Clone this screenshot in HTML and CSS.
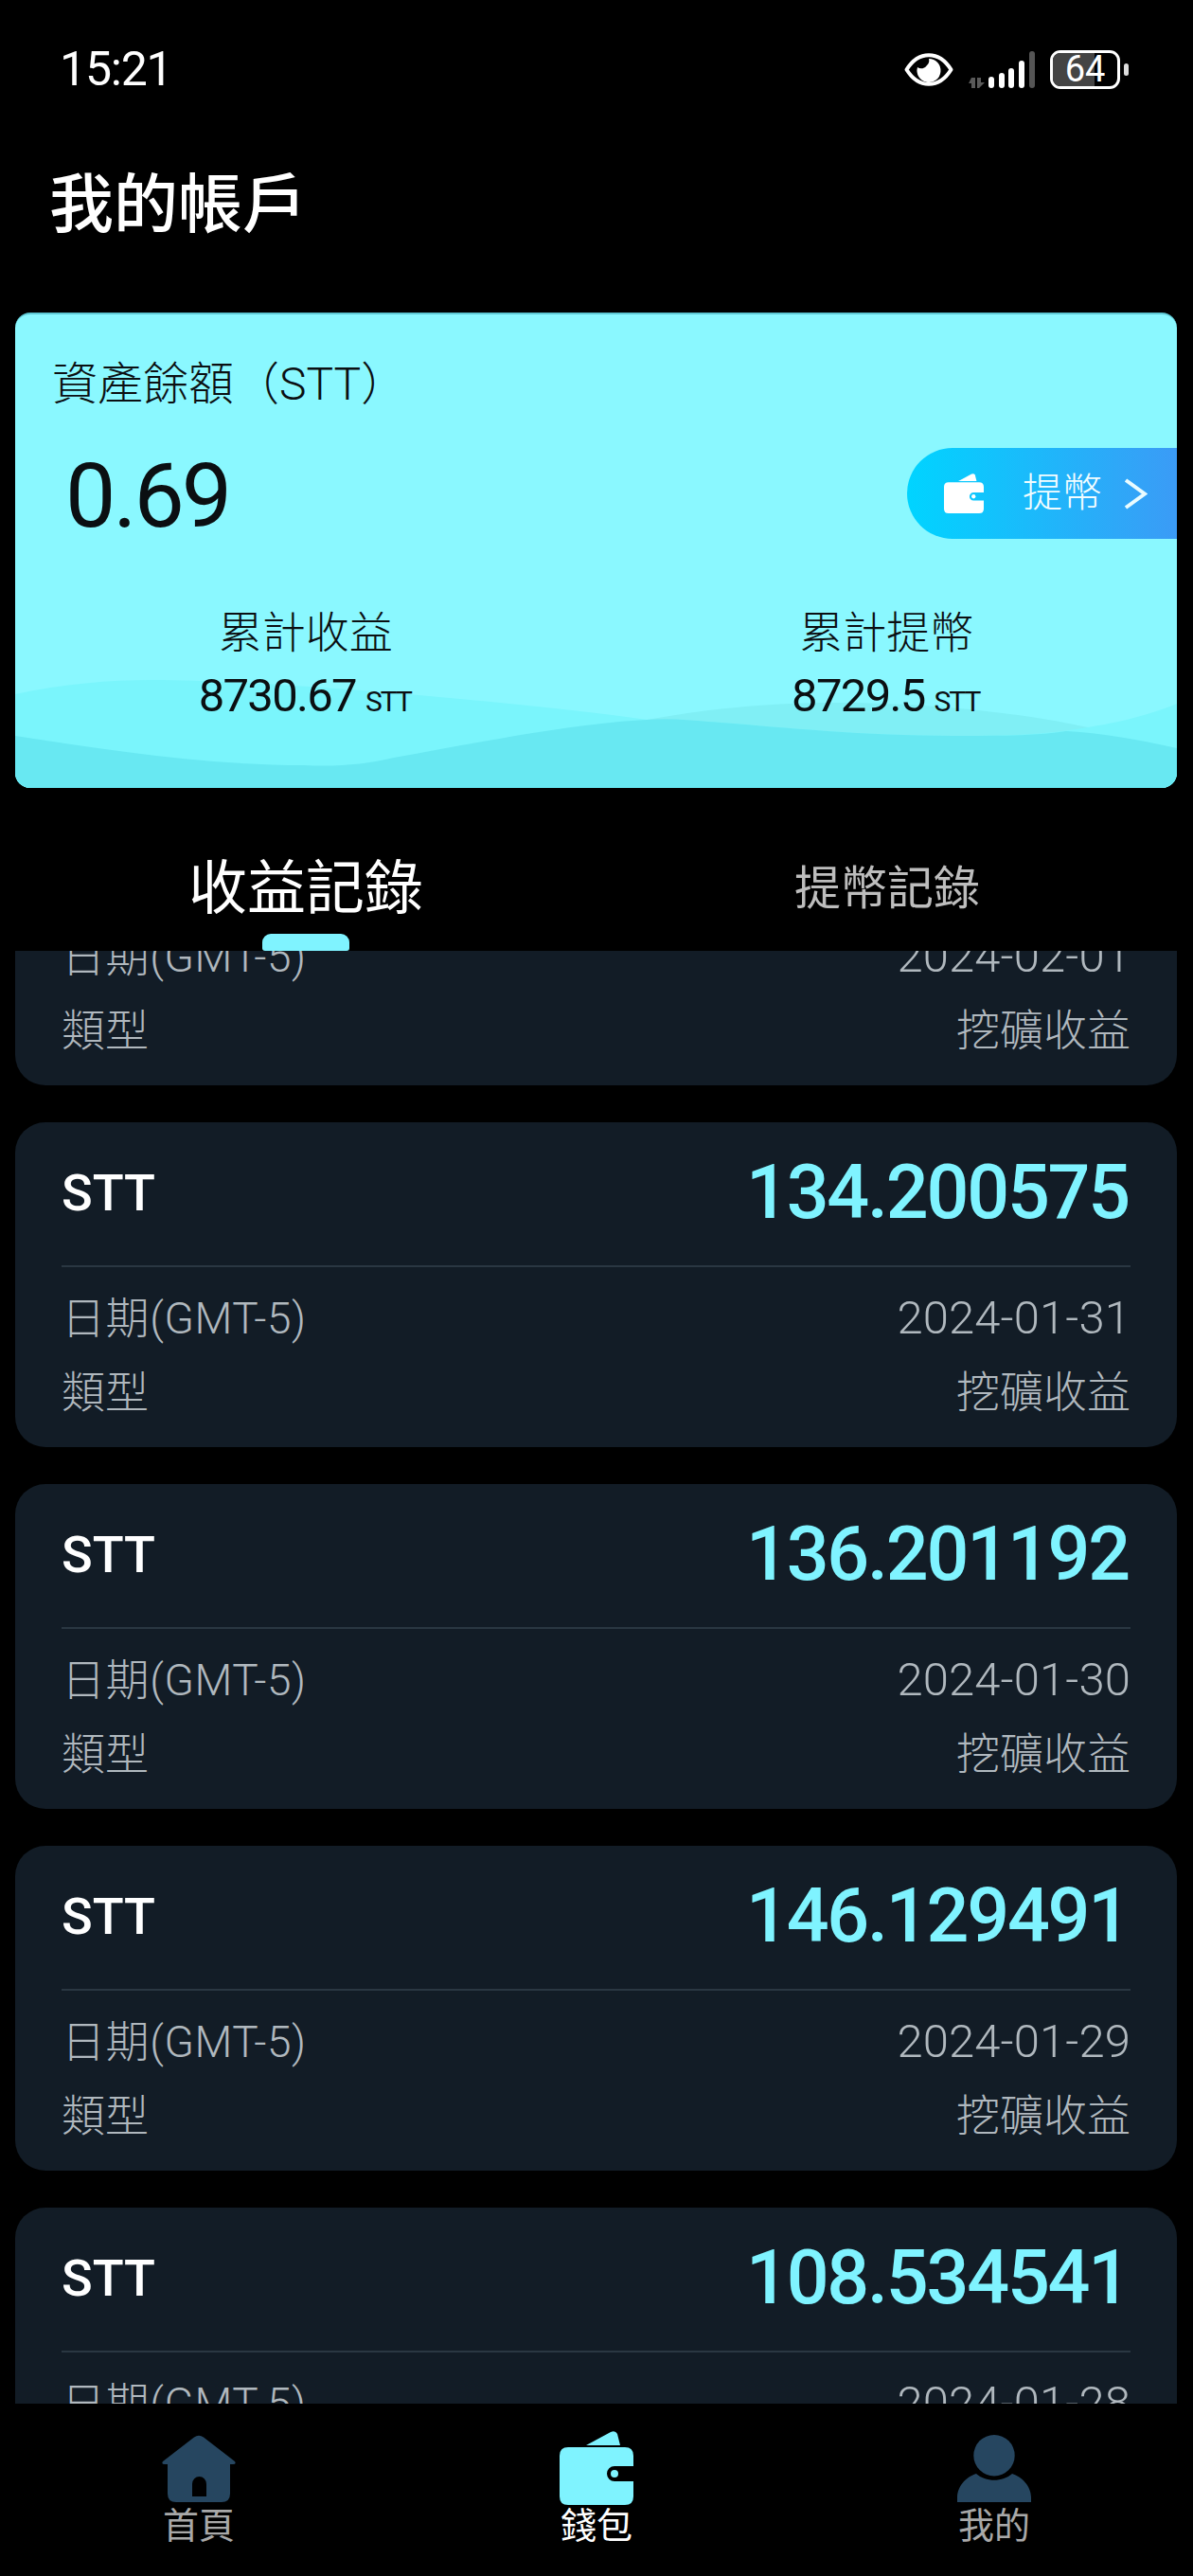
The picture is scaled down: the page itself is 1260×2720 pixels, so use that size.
FILE: index.html
```html
<!DOCTYPE html>
<html lang="zh-Hant">
<head>
<meta charset="utf-8">
<title>我的帳戶</title>
<link rel="stylesheet" href="styles.css">
</head>
<body>
<svg class="defs" width="0" height="0" aria-hidden="true">
  <symbol id="wallet" viewBox="0 0 78 78">
    <path d="M28 15 L54 1 Q59 -1 61 3 L64 15 Z"/>
    <path fill-rule="evenodd" d="M9 17 H69 Q78 17 78 26 V37 H58 A8 8 0 0 0 58 53 H78 V69 Q78 78 69 78 H9 Q0 78 0 69 V26 Q0 17 9 17 Z"/>
    <circle cx="58" cy="45" r="4"/>
  </symbol>
</svg>
<div class="page">
  <header class="status">
    <span class="time">15:21</span>
    <div class="status-icons">
      <svg class="eye" viewBox="0 0 52 35">
        <path fill="none" stroke="#fff" stroke-width="4" stroke-linejoin="round" d="M2.5 17.5 C9 7 17 2.2 26 2.2 C35 2.2 43 7 49.5 17.5 C43 28 35 32.8 26 32.8 C17 32.8 9 28 2.5 17.5 Z"/>
        <path fill="#fff" fill-rule="evenodd" d="M26 6 A12.5 12.5 0 1 1 14 15 A7 7 0 0 0 24 13 A7 7 0 0 0 26 6 Z"/>
      </svg>
      <svg class="signal" viewBox="0 0 70 40">
        <path fill="#5a5a5a" d="M3 28 H7 V39 H3 V34 L0 34 Z M9 28 H13 V33 H17 L11 39 H9 Z"/>
        <rect x="21" y="27" width="6" height="12" rx="3" fill="#fff"/>
        <rect x="32" y="23" width="6" height="16" rx="3" fill="#fff"/>
        <rect x="42" y="18" width="6" height="21" rx="3" fill="#fff"/>
        <rect x="53" y="10" width="6" height="29" rx="3" fill="#fff"/>
        <rect x="64" y="0" width="6" height="39" rx="3" fill="#555"/>
      </svg>
      <div class="battery">
        <div class="battery-box">
          <div class="battery-fill"></div>
          <span class="battery-text">64</span>
        </div>
        <i class="battery-nub"></i>
      </div>
    </div>
  </header>

  <h1 class="title">我的帳戶</h1>

  <section class="hero">
    <svg class="waves" viewBox="0 0 1227 120" preserveAspectRatio="none">
      <path fill="#7af5fc" d="M0 21 C50 10 100 6 145 6 C270 6 540 30 667 48 L1133 56 C1170 50 1200 42 1227 31 V120 H0 Z"/>
      <path fill="#80eff5" d="M667 48 C740 35 800 30 871 30 C960 30 1060 40 1133 56 C1080 65 1040 65 989 65 C890 65 800 55 732 50 Z"/>
      <path fill="#68e8f2" d="M0 65 C100 80 200 96 305 96 C340 98 370 95 400 88 C500 70 590 52 667 48 C690 46 710 48 732 50 C800 55 890 65 989 65 C1040 65 1080 65 1110 60 C1150 62 1190 70 1227 78 V120 H0 Z"/>
    </svg>
    <div class="hero-label">資產餘額（STT）</div>
    <div class="hero-amount-row">
      <span class="hero-amount">0.69</span>
      <a class="withdraw">
        <svg class="withdraw-icon"><use href="#wallet"/></svg>
        <span class="withdraw-text">提幣</span>
        <svg class="withdraw-chev" viewBox="0 0 25 33"><path d="M2 2 L22 16.5 L2 31" fill="none" stroke="#eafcff" stroke-width="4"/></svg>
      </a>
    </div>
    <div class="stats">
      <div class="stat">
        <div class="stat-label">累計收益</div>
        <div class="stat-value">8730.67<small>STT</small></div>
      </div>
      <div class="stat">
        <div class="stat-label">累計提幣</div>
        <div class="stat-value">8729.5<small>STT</small></div>
      </div>
    </div>
  </section>

  <nav class="tabs">
    <div class="tab tab-active">收益記錄</div>
    <div class="tab">提幣記錄</div>
  </nav>

  <main class="list">
    <article class="card card-scrolled">
      <div class="card-head"></div>
      <div class="card-rows">
        <div class="row"><span class="mixed">日期(GMT-5)</span><span class="date">2024-02-01</span></div>
        <div class="row"><span>類型</span><span>挖礦收益</span></div>
      </div>
    </article>
    <article class="card">
      <div class="card-head"><span class="coin">STT</span><span class="amount">134.200575</span></div>
      <div class="card-rows">
        <div class="row"><span class="mixed">日期(GMT-5)</span><span class="date">2024-01-31</span></div>
        <div class="row"><span>類型</span><span>挖礦收益</span></div>
      </div>
    </article>
    <article class="card">
      <div class="card-head"><span class="coin">STT</span><span class="amount">136.201192</span></div>
      <div class="card-rows">
        <div class="row"><span class="mixed">日期(GMT-5)</span><span class="date">2024-01-30</span></div>
        <div class="row"><span>類型</span><span>挖礦收益</span></div>
      </div>
    </article>
    <article class="card">
      <div class="card-head"><span class="coin">STT</span><span class="amount">146.129491</span></div>
      <div class="card-rows">
        <div class="row"><span class="mixed">日期(GMT-5)</span><span class="date">2024-01-29</span></div>
        <div class="row"><span>類型</span><span>挖礦收益</span></div>
      </div>
    </article>
    <article class="card">
      <div class="card-head"><span class="coin">STT</span><span class="amount">108.534541</span></div>
      <div class="card-rows">
        <div class="row"><span class="mixed">日期(GMT-5)</span><span class="date">2024-01-28</span></div>
      </div>
    </article>
  </main>

  <footer class="bottom-nav">
    <div class="nav-item">
      <svg class="nav-icon" viewBox="0 0 78 78">
        <path fill="#264660" fill-rule="evenodd" d="M34 2.5 Q39 -1 44 2.5 L77 28 Q79 31 75 31 H72 V62 Q72 71 63 71 H15 Q6 71 6 62 V31 H3 Q-1 31 1 28 Z M32 65 H47 V52 A7.5 8 0 0 0 32 52 Z"/>
      </svg>
      <span class="nav-label">首頁</span>
    </div>
    <div class="nav-item nav-item-active">
      <svg class="nav-icon nav-icon-wallet"><use href="#wallet"/></svg>
      <span class="nav-label">錢包</span>
    </div>
    <div class="nav-item">
      <svg class="nav-icon" viewBox="0 0 78 78">
        <circle cx="39" cy="21.7" r="21.7" fill="#264660"/>
        <path fill="#264660" d="M0 71 V66 C0 54 10 44 20 41 C30 50 48 50 58 41 C68 44 78 54 78 66 V71 Z"/>
      </svg>
      <span class="nav-label">我的</span>
    </div>
  </footer>
</div>
</body>
</html>
```

FILE: styles.css
```css
* { box-sizing: border-box; }
html, body { margin: 0; padding: 0; background: #000; }
body {
  font-family: Roboto, "Noto Sans CJK TC", sans-serif;
  color: #fff;
}
.defs { display: block; height: 0; }
.page {
  width: 1260px;
  height: 2720px;
  display: flex;
  flex-direction: column;
  overflow: hidden;
  background: #000;
}

/* status bar */
.status {
  height: 146px;
  flex: none;
  display: flex;
  align-items: center;
  justify-content: space-between;
  padding: 0 68px 0 63px;
}
.time { font-size: 50px; line-height: 1; letter-spacing: -1.2px; }
.status-icons { display: flex; align-items: center; }
.eye { width: 52px; height: 35px; margin-right: 16px; }
.signal { width: 70px; height: 40px; margin-right: 16px; margin-top: 1px; }
.battery { display: flex; align-items: center; gap: 4px; }
.battery-box {
  position: relative;
  width: 74px;
  height: 41px;
  border: 3px solid #fff;
  border-radius: 11px;
  overflow: hidden;
  display: flex;
  align-items: center;
  justify-content: center;
}
.battery-fill {
  position: absolute;
  left: 0; top: 0; bottom: 0;
  width: 64%;
  background: #444;
}
.battery-text { position: relative; font-size: 38px; font-weight: 400; line-height: 1; }
.battery-nub { display: block; width: 5px; height: 13px; border-radius: 3px; background: #ddd; }

/* title */
.title {
  flex: none;
  height: 138px;
  margin: 0 0 46px;
  padding: 4px 0 0 52px;
  font-size: 68px;
  font-weight: 500;
  line-height: 134px;
}

/* hero */
.hero {
  position: relative;
  flex: none;
  height: 502px;
  margin: 0 17px 0 16px;
  border-radius: 16px;
  overflow: hidden;
  background: #8af8ff;
  border-top: 2px solid #5ec8d4;
  color: #0b0f12;
}
.waves {
  position: absolute;
  left: 0; right: 0; bottom: 0;
  width: 100%;
  height: 120px;
}
.hero-label {
  position: relative;
  padding: 42px 0 0 39px;
  font-size: 48px;
  line-height: 64px;
  font-weight: 300;
}
.hero-amount-row {
  position: relative;
  display: flex;
  align-items: center;
  justify-content: space-between;
  margin-top: 35px;
  padding-left: 53px;
  height: 96px;
}
.hero-amount { font-size: 95px; line-height: 96px; font-weight: 400; margin-top: 6px; letter-spacing: -3px; }
.withdraw {
  width: 285px;
  height: 96px;
  display: flex;
  align-items: center;
  padding-left: 39px;
  border-radius: 48px 0 0 48px;
  background: linear-gradient(90deg, #00d4ff, #3b9bf6);
  color: #f2fdff;
}
.withdraw-icon { width: 42px; height: 44px; fill: #fff; margin-right: 41px; }
.withdraw-text { font-size: 42px; line-height: 1; font-weight: 300; }
.withdraw-chev { width: 25px; height: 33px; margin-left: 23px; }
.stats {
  position: relative;
  display: grid;
  grid-template-columns: 1fr 1fr;
  margin-top: 68px;
}
.stat { text-align: center; }
.stat-label { font-size: 46px; line-height: 62px; font-weight: 300; }
.stat-value { font-size: 49px; line-height: 64px; margin-top: 4px; letter-spacing: -1.7px; margin-left: -2px; }
.stat-value small { font-size: 30px; margin-left: 10px; letter-spacing: -2px; }

/* tabs */
.tabs {
  flex: none;
  height: 172px;
  display: grid;
  grid-template-columns: 1fr 1fr;
  margin: 0 16px;
}
.tab {
  position: relative;
  text-align: center;
  font-size: 49px;
  line-height: 80px;
  padding-top: 67px;
  height: 172px;
  color: #bdbdbd;
}
.tab-active { font-size: 62px; color: #fff; font-weight: 400; }
.tab-active::after {
  content: "";
  position: absolute;
  left: 50%;
  bottom: 0;
  width: 92px;
  height: 18px;
  margin-left: -46px;
  border-radius: 9px 9px 3px 3px;
  background: #7ff3ff;
}

/* list */
.list {
  flex: 1;
  min-height: 0;
  overflow: hidden;
  padding: 0 17px 0 16px;
}
.card {
  height: 343px;
  margin-bottom: 39px;
  border-radius: 32px;
  background: #121c26;
}
.card-scrolled { margin-top: -201px; }
.card-head {
  height: 153px;
  margin: 0 49px;
  padding-bottom: 3px;
  display: flex;
  align-items: center;
  justify-content: space-between;
  border-bottom: 2px solid #2a3742;
}
.coin { font-size: 54px; font-weight: 500; }
.amount { font-size: 79px; font-weight: 500; color: #7ff3ff; letter-spacing: -2.2px; margin-right: 2px; }
.card-rows { padding: 15px 49px 0; }
.row {
  display: flex;
  justify-content: space-between;
  font-size: 46px;
  line-height: 78px;
  font-weight: 300;
  color: #b0b8be;
}
.mixed { letter-spacing: 0.6px; }
.date { font-size: 49px; letter-spacing: 0.1px; }

/* bottom nav */
.bottom-nav {
  flex: none;
  height: 182px;
  display: grid;
  grid-template-columns: repeat(3, 1fr);
  background: #000;
  padding-top: 29px;
}
.nav-item { display: flex; flex-direction: column; align-items: center; }
.nav-icon { width: 78px; height: 78px; display: block; margin-top: 4px; }
.nav-icon-wallet { margin-top: 0; margin-bottom: 4px; fill: #7ff3ff; }
.nav-label {
  font-size: 38px;
  line-height: 44px;
  margin-top: -4px;
  color: #a8a8a8;
}
.nav-item-active .nav-label { color: #fff; font-weight: 400; }
```
